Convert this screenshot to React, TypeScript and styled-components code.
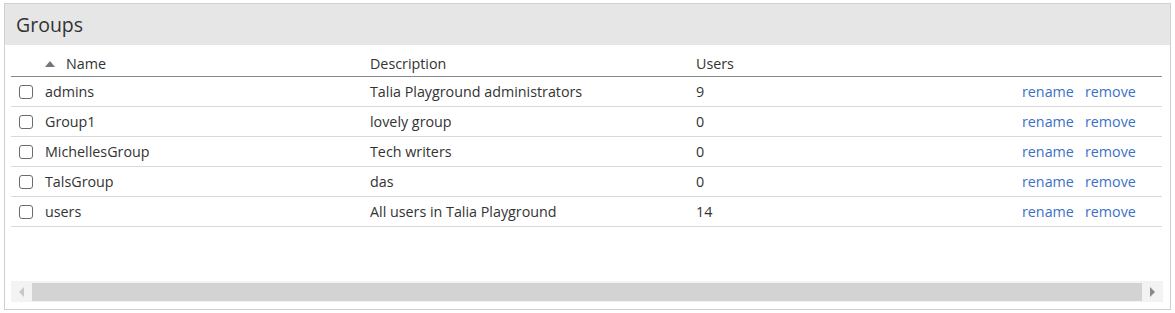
import React from 'react';
import styled, { createGlobalStyle } from 'styled-components';

interface Group {
  name: string;
  description: string;
  users: number;
}

const groups: Group[] = [
  { name: 'admins', description: 'Talia Playground administrators', users: 9 },
  { name: 'Group1', description: 'lovely group', users: 0 },
  { name: 'MichellesGroup', description: 'Tech writers', users: 0 },
  { name: 'TalsGroup', description: 'das', users: 0 },
  { name: 'users', description: 'All users in Talia Playground', users: 14 },
];

const GlobalStyle = createGlobalStyle`
  body {
    margin: 0;
    background: #fff;
    font-family: 'Open Sans', 'Noto Sans', sans-serif;
    color: #333;
  }
`;

export default function App() {
  return (
    <>
      <GlobalStyle />
      <Panel>
        <PanelHeader>Groups</PanelHeader>
        <PanelBody>
          <Table>
            <colgroup>
              <col style={{ width: 31 }} />
              <col style={{ width: 325 }} />
              <col style={{ width: 326 }} />
              <col style={{ width: 326 }} />
              <col style={{ width: 63 }} />
              <col style={{ width: 80 }} />
            </colgroup>
            <thead>
              <tr>
                <HeadCell />
                <HeadCell>
                  <SortArrow />
                  Name
                </HeadCell>
                <HeadCell>Description</HeadCell>
                <HeadCell>Users</HeadCell>
                <HeadCell />
                <HeadCell />
              </tr>
            </thead>
            <tbody>
              {groups.map(g => (
                <tr key={g.name}>
                  <CheckCell>
                    <Checkbox type="checkbox" />
                  </CheckCell>
                  <Cell>{g.name}</Cell>
                  <Cell>{g.description}</Cell>
                  <Cell>{g.users}</Cell>
                  <Cell>
                    <ActionLink>rename</ActionLink>
                  </Cell>
                  <Cell>
                    <ActionLink>remove</ActionLink>
                  </Cell>
                </tr>
              ))}
            </tbody>
          </Table>
          <ScrollBar>
            <ScrollArrow direction="left" />
            <ScrollThumb />
            <ScrollArrow direction="right" />
          </ScrollBar>
        </PanelBody>
      </Panel>
    </>
  );
}

// Styled Components
const Panel = styled.div`
  margin: 3px 0 0 4px;
  width: 1165px;
  height: 305px;
  border: 1px solid #cfcfcf;
  display: flex;
  flex-direction: column;
`;

const PanelHeader = styled.div`
  height: 41px;
  background: #e6e6e6;
  padding-left: 11px;
  display: flex;
  align-items: center;
  font-size: 19.5px;
  color: #333;
`;

const PanelBody = styled.div`
  flex: 1;
  padding: 0 7px 7px 6px;
  display: flex;
  flex-direction: column;
  justify-content: space-between;
`;

const Table = styled.table`
  width: 1151px;
  border-collapse: collapse;
  table-layout: fixed;
  font-size: 14.3px;
`;

const HeadCell = styled.th`
  height: 25px;
  padding: 6px 3px 0;
  text-align: left;
  font-weight: 400;
  color: #333;
  border-bottom: 1px solid #8a8a8a;
  white-space: nowrap;
`;

const SortArrow = styled.span`
  display: inline-block;
  width: 0;
  height: 0;
  margin: 0 11px 2px 0;
  border-left: 5px solid transparent;
  border-right: 5px solid transparent;
  border-bottom: 6px solid #6f7680;
`;

const Cell = styled.td`
  height: 29px;
  padding: 0 3px;
  border-bottom: 1px solid #d9d9d9;
  white-space: nowrap;
  color: #333;
`;

const CheckCell = styled(Cell)`
  padding: 0 0 0 8px;
`;

const Checkbox = styled.input`
  appearance: none;
  display: block;
  width: 14px;
  height: 14px;
  margin: 0;
  border: 1px solid #6b6b6b;
  border-radius: 3px;
  background: #fff;
`;

const ActionLink = styled.a`
  color: #3b70c9;
  cursor: pointer;
`;

const ScrollBar = styled.div`
  height: 21px;
  background: #f3f3f3;
  display: flex;
  align-items: center;
`;

const ScrollThumb = styled.div`
  flex: 1;
  height: 18px;
  background: #d3d3d3;
`;

const ScrollArrow = styled.div<{ direction: 'left' | 'right' }>`
  width: 21px;
  display: flex;
  justify-content: center;

  &::before {
    content: '';
    width: 0;
    height: 0;
    border-top: 5px solid transparent;
    border-bottom: 5px solid transparent;
    ${props =>
      props.direction === 'left'
        ? 'border-right: 5px solid #c8c8c8;'
        : 'border-left: 5px solid #8a8a8a;'}
  }
`;
